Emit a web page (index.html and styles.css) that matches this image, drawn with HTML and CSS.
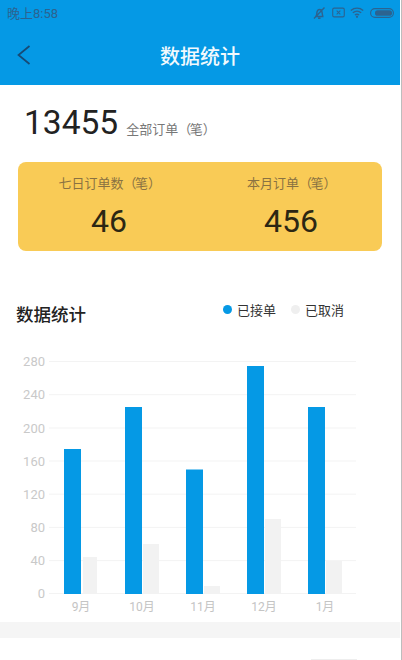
FILE: index.html
```html
<!DOCTYPE html>
<html lang="zh">
<head>
<meta charset="utf-8">
<title>数据统计</title>
<link rel="stylesheet" href="styles.css">
</head>
<body>
<div class="page">
  <header class="top">
    <div class="status">
      <span class="time">晚上8:58</span>
      <div class="status-icons">
        <svg class="ic-bell" viewBox="0 0 14 14"><path d="M3 10.500h8.500M4 10.500c1-1.500.6-3 1-4.500.4-1.600 1.500-2.500 2.500-2.500s2.200.9 2.500 2.500c.3 1.500.2 3 1 4.500M6 12.200h2.500M2 12.500 12.500 1.500" fill="none" stroke="#2c6390" stroke-width="1.400"/></svg>
        <svg class="ic-x" viewBox="0 0 14 12"><rect x=".7" y="1.200" width="12.600" height="9.600" rx="1.500" fill="none" stroke="#2c6390" stroke-width="1.200"/><path d="M5 4l4 4M9 4l-4 4" stroke="#2c6390" stroke-width="1.100"/></svg>
        <svg class="ic-wifi" viewBox="0 0 14 11"><path d="M.8 3.500C4.500.4 9.500.4 13.200 3.500M2.800 5.800c2.600-2.100 5.800-2.100 8.400 0M4.900 8c1.300-1 2.900-1 4.200 0" fill="none" stroke="#2c6390" stroke-width="1.400"/><circle cx="7" cy="9.800" r="1.100" fill="#2c6390"/></svg>
        <svg class="ic-batt" viewBox="0 0 24 10"><rect x=".6" y=".6" width="22.800" height="8.800" rx="4.400" fill="none" stroke="#2c6390" stroke-width="1.100"/><rect x="5" y="2.200" width="17" height="5.600" rx="2.600" fill="#2c6390"/></svg>
      </div>
    </div>
    <div class="nav">
      <svg class="back" viewBox="0 0 14 20"><path d="M12.500 1 1.500 10 12.500 19" fill="none" stroke="#174a75" stroke-width="1.700"/></svg>
      <h1>数据统计</h1>
    </div>
  </header>

  <section class="total">
    <span class="total-num">13455</span>
    <span class="total-label">全部订单<span class="paren">（</span>笔<span class="paren">）</span></span>
  </section>

  <section class="card">
    <div class="card-col">
      <div class="card-label">七日订单数<span class="paren">（</span>笔<span class="paren">）</span></div>
      <div class="card-num">46</div>
    </div>
    <div class="card-col">
      <div class="card-label">本月订单<span class="paren">（</span>笔<span class="paren">）</span></div>
      <div class="card-num">456</div>
    </div>
  </section>

  <section class="chart-head">
    <h2>数据统计</h2>
    <div class="legend">
      <span class="dot dot-blue"></span><span class="legend-text">已接单</span>
      <span class="dot dot-gray"></span><span class="legend-text">已取消</span>
    </div>
  </section>

  <svg class="chart" viewBox="0 0 402 272" width="402" height="272">
    <g class="grid">
      <path d="M49 11.500H356M49 44.700H356M49 78H356M49 111H356M49 144.200H356M49 177.400H356M49 210.600H356M49 243.500H356"/>
    </g>
    <g class="axis-y">
      <text x="45" y="16">280</text>
      <text x="45" y="49">240</text>
      <text x="45" y="82.500">200</text>
      <text x="45" y="115.500">160</text>
      <text x="45" y="148.500">120</text>
      <text x="45" y="181.500">80</text>
      <text x="45" y="215">40</text>
      <text x="45" y="248">0</text>
    </g>
    <g class="bars-blue">
      <rect x="64" y="99" width="17" height="145"/>
      <rect x="125" y="57" width="17" height="187"/>
      <rect x="186" y="119.500" width="17" height="124.500"/>
      <rect x="247" y="16" width="17" height="228"/>
      <rect x="308" y="57" width="17" height="187"/>
    </g>
    <g class="bars-gray">
      <rect x="83" y="207" width="14" height="37"/>
      <rect x="143" y="194" width="16" height="50"/>
      <rect x="204" y="236" width="16" height="8"/>
      <rect x="265" y="169" width="16" height="75"/>
      <rect x="326" y="211" width="16" height="33"/>
    </g>
    <g class="axis-x">
      <text x="81" y="261">9月</text>
      <text x="142" y="261">10月</text>
      <text x="203" y="261">11月</text>
      <text x="264" y="261">12月</text>
      <text x="325" y="261">1月</text>
    </g>
  </svg>

  <div class="band"></div>
  <div class="next-edge"></div>
</div>
</body>
</html>
```

FILE: styles.css
```css
* { box-sizing: border-box; }
html, body { margin: 0; padding: 0; }
body {
  width: 402px;
  height: 660px;
  overflow: hidden;
  background: #fff;
  border-right: 1px solid #bdbdbd;
  font-family: Roboto, "Noto Sans CJK SC", sans-serif;
}
.page {
  width: 400px;
  height: 660px;
  overflow: hidden;
  background: #fff;
}
.top { background: #0599e5; height: 85px; }
.status {
  height: 25px;
  padding: 0 6px 0 7px;
  display: flex;
  align-items: center;
  justify-content: space-between;
}
.time { font-size: 13px; color: #2c6390; }
.status-icons { display: flex; align-items: center; gap: 5px; }
.ic-bell { width: 14px; height: 14px; }
.ic-x { width: 13px; height: 11px; margin-left: 1px; }
.ic-wifi { width: 14px; height: 11px; }
.ic-batt { width: 24px; height: 10px; margin-left: 1px; }
.nav {
  height: 60px;
  display: flex;
  align-items: center;
  justify-content: center;
  position: relative;
}
.back { position: absolute; left: 17px; top: 20px; width: 14px; height: 20px; }
h1 { margin: 0; font-size: 20px; font-weight: 500; color: #f2f9fd; }

.total {
  height: 60px;
  padding: 14px 0 0 24px;
  display: flex;
  align-items: baseline;
  gap: 8px;
}
.total-num { font-size: 33.500px; color: #222; line-height: 48px; }
.total-label { font-size: 13px; color: #777; }
.paren { font-family: "Noto Sans CJK TC", sans-serif; letter-spacing: -1.500px; }

.card {
  margin: 17px 0 0 18px;
  width: 364px;
  height: 89px;
  background: #f9cb56;
  border-radius: 8px;
  display: grid;
  grid-template-columns: 182px 182px;
}
.card-col { text-align: center; padding-top: 12px; }
.card-label { font-size: 13px; line-height: 17px; color: #8a7242; }
.card-num { font-size: 32px; line-height: 38px; margin-top: 10px; color: #2c2713; }

.chart-head {
  margin: 0;
  height: 93px;
  padding: 0 56px 0 16px;
  display: flex;
  justify-content: space-between;
}
h2 { margin: 52px 0 0; font-size: 17.500px; line-height: 24px; font-weight: 500; color: #222; }
.legend { display: flex; align-items: center; height: 20px; margin-top: 48px; font-size: 13px; color: #333; }
.dot { width: 9px; height: 9px; border-radius: 50%; margin-right: 5px; }
.dot-blue { background: #0599e5; }
.dot-gray { background: #efefef; margin-left: 15px; }

.chart { display: block; margin-top: 6px; }
.grid path { stroke: #f3f3f3; stroke-width: 1; fill: none; }
.axis-y text { font-size: 13px; fill: #c9c9c9; text-anchor: end; }
.axis-x text { font-size: 12px; fill: #c4c4c4; text-anchor: middle; }
.bars-blue rect { fill: #0599e5; }
.bars-gray rect { fill: #f2f2f2; }
.band { height: 16px; background: #f5f5f5; }
.next-edge { width: 46px; height: 1px; margin: 21px 0 0 311px; background: #eee; }
```
